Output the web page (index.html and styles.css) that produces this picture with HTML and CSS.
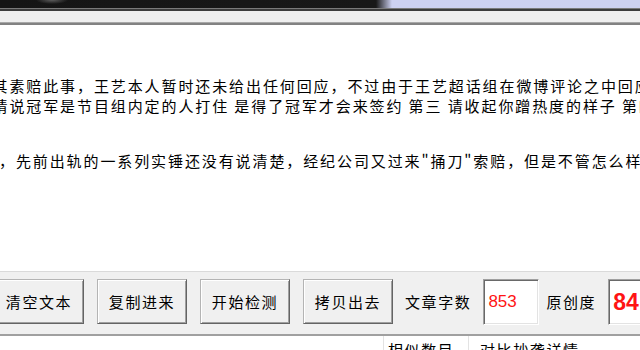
FILE: index.html
```html
<!DOCTYPE html>
<html lang="zh">
<head>
<meta charset="utf-8">
<title>原创度检测</title>
<link rel="stylesheet" href="styles.css">
</head>
<body>
<div class="app">
  <div class="topbar"></div>
  <div class="menubar"></div>
  <div class="editor">
    <div class="line shift">其素赔此事，王艺本人暂时还未给出任何回应，不过由于王艺超话组在微博评论之中回应</div>
    <div class="line shift">请说冠军是节目组内定的人打住 是得了冠军才会来签约 第三 请收起你蹭热度的样子 第四</div>
    <div class="line para">，先前出轨的一系列实锤还没有说清楚，经纪公司又过来"捅刀"索赔，但是不管怎么样，</div>
  </div>
  <div class="toolbar">
    <button class="btn first">清空文本</button>
    <button class="btn">复制进来</button>
    <button class="btn">开始检测</button>
    <button class="btn">拷贝出去</button>
    <span class="lbl">文章字数</span>
    <div class="field count">853</div>
    <span class="lbl near">原创度</span>
    <div class="field score">84</div>
  </div>
  <div class="listhead">
    <div class="col c1"></div>
    <div class="col c2">相似数目</div>
    <div class="col c3">对比抄袭详情</div>
  </div>
</div>
</body>
</html>
```
FILE: styles.css
```css
html, body {
  margin: 0;
  padding: 0;
}
body {
  width: 640px;
  height: 350px;
  overflow: hidden;
  background: #f0f0f0;
  font-family: "Noto Sans CJK SC", "Microsoft YaHei", sans-serif;
  color: #000;
}
.app {
  width: 640px;
  height: 350px;
  overflow: hidden;
}
.topbar {
  height: 8px;
  border-bottom: 1px solid #7a7a7a;
  background:
    radial-gradient(ellipse 16px 4px at 52px 0, #5c5c5c, rgba(0,0,0,0)),
    linear-gradient(to right, #151515 0, #181818 376px, #cdd1f1 392px, #cdd1f0 100%);
}
.menubar {
  height: 11px;
  border-top: 2px solid #3c3c3c;
  border-bottom: 1px solid #a8a8a8;
  background: #efefef;
}
.editor {
  box-sizing: border-box;
  height: 249px;
  border-top: 2px solid #828282;
  border-bottom: 1px solid #dadada;
  background: #fff;
  padding-top: 51px;
  overflow: hidden;
  font-size: 15px;
  letter-spacing: 1.9px;
  line-height: 20px;
}
.line {
  white-space: nowrap;
}
.shift {
  margin-left: -7.5px;
}
.para {
  margin-top: 35px;
  margin-left: -1px;
}
.toolbar {
  box-sizing: border-box;
  height: 62px;
  padding-top: 7px;
  display: flex;
  align-items: flex-start;
  background: #f0f0f0;
}
.btn {
  box-sizing: border-box;
  flex: none;
  width: 90px;
  height: 45px;
  margin: 0 0 0 13px;
  padding: 0;
  background: #f0f0f0;
  border-style: solid;
  border-width: 1px;
  border-color: #b4b4b4 #646464 #646464 #b4b4b4;
  box-shadow: inset 1px 1px #ffffff, inset -1px -1px #a0a0a0;
  font-family: "Noto Sans CJK SC", "Microsoft YaHei", sans-serif;
  font-size: 15px;
  letter-spacing: 1.6px;
  color: #000;
  line-height: 20px;
}
.btn.first {
  margin-left: -6px;
}
.lbl {
  flex: none;
  margin-left: 12px;
  height: 45px;
  line-height: 45px;
  font-size: 15px;
  letter-spacing: 1.6px;
}
.lbl.near {
  margin-left: 7px;
}
.field {
  box-sizing: border-box;
  flex: none;
  height: 46px;
  margin-left: 12px;
  background: #fff;
  border-style: solid;
  border-width: 1px;
  border-color: #a0a0a0 #ffffff #ffffff #a0a0a0;
  box-shadow: inset 1px 1px #696969, inset -1px -1px #e3e3e3;
  color: #ff1414;
  font-family: "Liberation Sans", Arial, sans-serif;
  line-height: 44px;
}
.count {
  width: 56px;
  padding-left: 4px;
  font-size: 17px;
}
.score {
  width: 64px;
  padding-left: 4px;
  font-size: 23px;
  font-weight: bold;
}
.listhead {
  display: flex;
  height: 30px;
  border-top: 2px solid #a0a0a0;
  background: #fff;
}
.col {
  box-sizing: border-box;
  height: 30px;
  padding-top: 4px;
  font-size: 15px;
  letter-spacing: 1.6px;
  line-height: 20px;
  white-space: nowrap;
  border-right: 1px solid #e3e3e3;
}
.c1 {
  width: 384px;
}
.c2 {
  width: 85px;
  padding-left: 4px;
}
.c3 {
  flex: 1;
  padding-left: 11px;
  border-right: none;
}
```
